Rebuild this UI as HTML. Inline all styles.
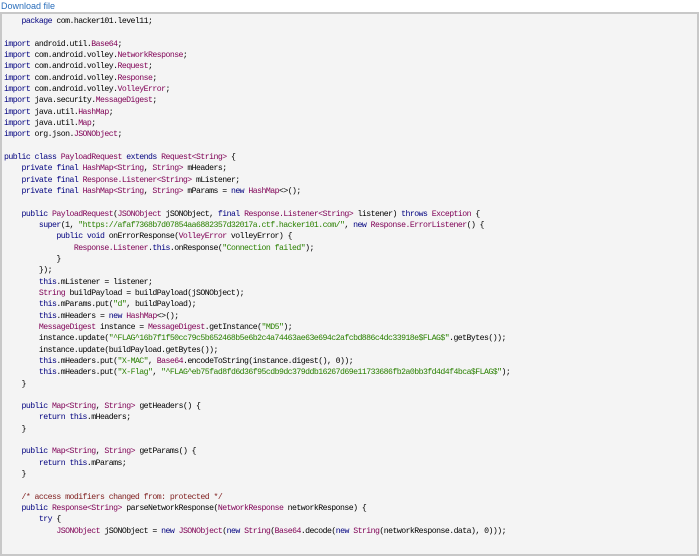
<!DOCTYPE html>
<html><head><meta charset="utf-8"><style>
html,body{margin:0;padding:0;background:#fff;width:700px;height:534px;overflow:hidden}
a{position:absolute;left:1px;top:0;font:9px "Liberation Sans",sans-serif;color:#2a6ebb;text-decoration:none;line-height:12px}
.box{position:absolute;left:0;top:12px;width:695px;height:540px;border:2px solid #c8c8c8;background:#f4f4f4}
pre{margin:0;position:absolute;left:2px;top:2px;font:8.2px/11.33px "Liberation Mono",monospace;letter-spacing:-0.55px;color:#000;white-space:pre}
.k{color:#00007f}.t{color:#7f0055}.s{color:#2a8000}.c{color:#7f1d1d}
</style></head><body>
<a>Download file</a>
<div class="box"><pre>    <span class="k">package</span> com.hacker101.level11;

<span class="k">import</span> android.util.<span class="t">Base64</span>;
<span class="k">import</span> com.android.volley.<span class="t">NetworkResponse</span>;
<span class="k">import</span> com.android.volley.<span class="t">Request</span>;
<span class="k">import</span> com.android.volley.<span class="t">Response</span>;
<span class="k">import</span> com.android.volley.<span class="t">VolleyError</span>;
<span class="k">import</span> java.security.<span class="t">MessageDigest</span>;
<span class="k">import</span> java.util.<span class="t">HashMap</span>;
<span class="k">import</span> java.util.<span class="t">Map</span>;
<span class="k">import</span> org.json.<span class="t">JSONObject</span>;

<span class="k">public class</span> <span class="t">PayloadRequest</span> <span class="k">extends</span> <span class="t">Request&lt;String&gt;</span> {
    <span class="k">private final</span> <span class="t">HashMap&lt;String</span>, <span class="t">String&gt;</span> mHeaders;
    <span class="k">private final</span> <span class="t">Response.Listener&lt;String&gt;</span> mListener;
    <span class="k">private final</span> <span class="t">HashMap&lt;String</span>, <span class="t">String&gt;</span> mParams = <span class="k">new</span> <span class="t">HashMap</span>&lt;&gt;();

    <span class="k">public</span> <span class="t">PayloadRequest</span>(<span class="t">JSONObject</span> jSONObject, <span class="k">final</span> <span class="t">Response.Listener&lt;String&gt;</span> listener) <span class="k">throws</span> <span class="t">Exception</span> {
        <span class="k">super</span>(1, <span class="s">"https://afaf7368b7d07854aa6882357d32017a.ctf.hacker101.com/"</span>, <span class="k">new</span> <span class="t">Response.ErrorListener</span>() {
            <span class="k">public void</span> onErrorResponse(<span class="t">VolleyError</span> volleyError) {
                <span class="t">Response.Listener</span>.<span class="k">this</span>.onResponse(<span class="s">"Connection failed"</span>);
            }
        });
        <span class="k">this</span>.mListener = listener;
        <span class="t">String</span> buildPayload = buildPayload(jSONObject);
        <span class="k">this</span>.mParams.put(<span class="s">"d"</span>, buildPayload);
        <span class="k">this</span>.mHeaders = <span class="k">new</span> <span class="t">HashMap</span>&lt;&gt;();
        <span class="t">MessageDigest</span> instance = <span class="t">MessageDigest</span>.getInstance(<span class="s">"MD5"</span>);
        instance.update(<span class="s">"^FLAG^16b7f1f50cc79c5b652468b5e6b2c4a74463ae63e694c2afcbd886c4dc33918e$FLAG$"</span>.getBytes());
        instance.update(buildPayload.getBytes());
        <span class="k">this</span>.mHeaders.put(<span class="s">"X-MAC"</span>, <span class="t">Base64</span>.encodeToString(instance.digest(), 0));
        <span class="k">this</span>.mHeaders.put(<span class="s">"X-Flag"</span>, <span class="s">"^FLAG^eb75fad8fd6d36f95cdb9dc379ddb16267d69e11733686fb2a0bb3fd4d4f4bca$FLAG$"</span>);
    }

    <span class="k">public</span> <span class="t">Map&lt;String</span>, <span class="t">String&gt;</span> getHeaders() {
        <span class="k">return this</span>.mHeaders;
    }

    <span class="k">public</span> <span class="t">Map&lt;String</span>, <span class="t">String&gt;</span> getParams() {
        <span class="k">return this</span>.mParams;
    }

    <span class="c">/* access modifiers changed from: protected */</span>
    <span class="k">public</span> <span class="t">Response&lt;String&gt;</span> parseNetworkResponse(<span class="t">NetworkResponse</span> networkResponse) {
        <span class="k">try</span> {
            <span class="t">JSONObject</span> jSONObject = <span class="k">new</span> <span class="t">JSONObject</span>(<span class="k">new</span> <span class="t">String</span>(<span class="t">Base64</span>.decode(<span class="k">new</span> <span class="t">String</span>(networkResponse.data), 0)));
</pre></div>
</body></html>
